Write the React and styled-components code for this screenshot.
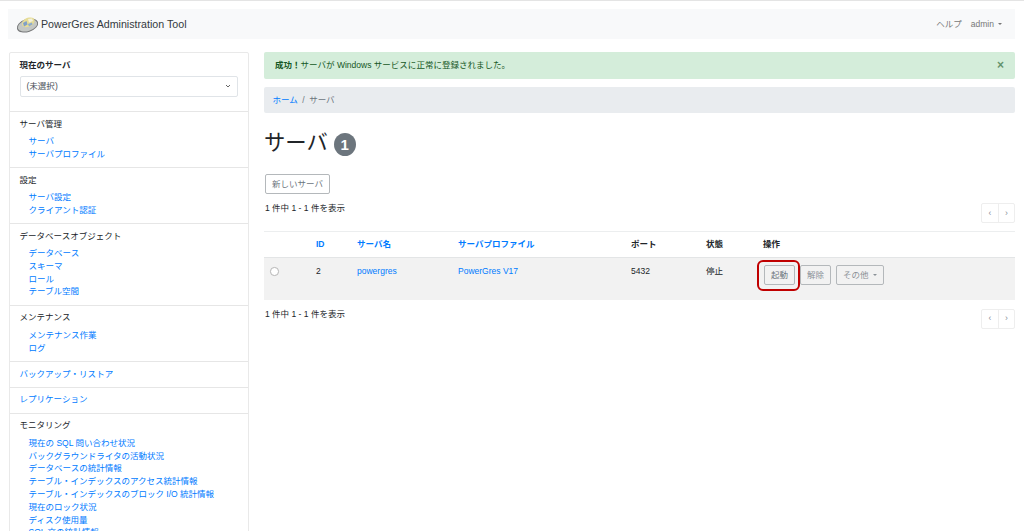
import styled, { createGlobalStyle } from 'styled-components'

const GlobalStyle = createGlobalStyle`
html, body {
  margin:0;
  height:531px;
  overflow:hidden;
  background:#fff;
}
body {
  font-family:"Liberation Sans","Noto Sans CJK JP",sans-serif;
  font-size:8.53px;
  line-height:12.8px;
  color:#212529;
}
* { box-sizing:border-box; }
`

const sections = [
  { title: "サーバ管理", links: ["サーバ", "サーバプロファイル"] },
  { title: "設定", links: ["サーバ設定", "クライアント認証"] },
  { title: "データベースオブジェクト", links: ["データベース", "スキーマ", "ロール", "テーブル空間"] },
  { title: "メンテナンス", links: ["メンテナンス作業", "ログ"] },
  { link: "バックアップ・リストア" },
  { link: "レプリケーション" },
  {
    title: "モニタリング",
    links: [
      "現在の SQL 問い合わせ状況",
      "バックグラウンドライタの活動状況",
      "データベースの統計情報",
      "テーブル・インデックスのアクセス統計情報",
      "テーブル・インデックスのブロック I/O 統計情報",
      "現在のロック状況",
      "ディスク使用量",
      "SQL 文の統計情報",
    ],
  },
]

function Logo() {
  return (
    <svg width="23" height="19" viewBox="0 0 23 19">
      <ellipse cx="11.5" cy="10.5" rx="10.5" ry="6" transform="rotate(-18 11.5 10.5)" fill="#c4c7c4" stroke="#77797a" strokeWidth="1" />
      <path d="M6 9c0-3 3-6 7-6.5 4-.5 6 1 5.500 3.500-.5 3-3 5.500-7 6-3.500.5-5.500-.5-5.500-3z" fill="#e6dc96" />
      <path d="M7 8l3.500-2 1 3.500-3.500 2z" fill="#7f9fc9" />
      <path d="M12 4l4-.5 1 2.500-4 1.500z" fill="#f3f1dc" />
      <path d="M12 9l4-1.500.5 2-3.500 2z" fill="#8daccc" />
    </svg>
  )
}

function Pager() {
  return (
    <PagerGroup>
      <PagerButton>‹</PagerButton>
      <PagerButton>›</PagerButton>
    </PagerGroup>
  )
}

function App() {
  return (
    <Page>
      <GlobalStyle />
      <Navbar>
        <Brand><Logo />PowerGres Administration Tool</Brand>
        <NavRight>
          <NavLink>ヘルプ</NavLink>
          <NavLink>admin<Caret /></NavLink>
        </NavRight>
      </Navbar>
      <Columns>
        <Sidebar>
          <CurrentServer>
            <Strong>現在のサーバ</Strong>
            <FakeSelect>
              (未選択)
              <svg width="6" height="4" viewBox="0 0 6 4"><path d="M1 1l2 2 2-2" fill="none" stroke="#666" strokeWidth="1" /></svg>
            </FakeSelect>
          </CurrentServer>
          {sections.map(section => (
            <Section key={section.title || section.link}>
              {section.link ? <Link>{section.link}</Link> : <SectionTitle>{section.title}</SectionTitle>}
              {section.links && (
                <SubList>
                  {section.links.map(link => <Link key={link}>{link}</Link>)}
                </SubList>
              )}
            </Section>
          ))}
        </Sidebar>
        <Main>
          <Alert>
            <span><Strong>成功！</Strong>サーバが Windows サービスに正常に登録されました。</span>
            <Close>×</Close>
          </Alert>
          <Breadcrumb>
            <Link>ホーム</Link>
            <BreadcrumbSep>/</BreadcrumbSep>
            <span>サーバ</span>
          </Breadcrumb>
          <Heading>サーバ<Badge>1</Badge></Heading>
          <OutlineButton $wide>新しいサーバ</OutlineButton>
          <ResultRow $height="29px">
            <CountText>1 件中 1 - 1 件を表示</CountText>
            <Pager />
          </ResultRow>
          <Table>
            <colgroup>
              <col width="45.6" />
              <col width="41" />
              <col width="101" />
              <col width="173" />
              <col width="75" />
              <col width="57" />
              <col />
            </colgroup>
            <thead>
              <tr>
                <Th />
                <Th><Link>ID</Link></Th>
                <Th><Link>サーバ名</Link></Th>
                <Th><Link>サーバプロファイル</Link></Th>
                <Th>ポート</Th>
                <Th>状態</Th>
                <Th>操作</Th>
              </tr>
            </thead>
            <tbody>
              <tr>
                <Td><Radio /></Td>
                <Td>2</Td>
                <Td><Link>powergres</Link></Td>
                <Td><Link>PowerGres V17</Link></Td>
                <Td>5432</Td>
                <Td>停止</Td>
                <Td>
                  <Actions>
                    <Highlighted><OutlineButton>起動</OutlineButton></Highlighted>
                    <OutlineButton $muted>解除</OutlineButton>
                    <OutlineButton $muted>その他<Caret /></OutlineButton>
                  </Actions>
                </Td>
              </tr>
            </tbody>
          </Table>
          <ResultRow $height="27px">
            <CountText>1 件中 1 - 1 件を表示</CountText>
            <Pager />
          </ResultRow>
        </Main>
      </Columns>
    </Page>
  )
}

const Page = styled.div`
border-top:1px solid #e4e4e4;
padding:8px 9px 0 8px;
height:531px;
overflow:hidden;
`

const Navbar = styled.div`
display:flex;
align-items:center;
justify-content:space-between;
height:30px;
padding:0 8px;
background:#f8f9fa;
`

const Brand = styled.div`
display:flex;
align-items:center;
gap:2px;
font-size:10.67px;
color:#343a40;
`

const NavRight = styled.div`
display:flex;
gap:9px;
margin-right:5px;
`

const NavLink = styled.span`
color:#777;
`

const Caret = styled.span`
display:inline-block;
margin-left:4px;
vertical-align:1.5px;
border-top:2.5px solid currentColor;
border-left:2.5px solid transparent;
border-right:2.5px solid transparent;
`

const Columns = styled.div`
display:flex;
align-items:flex-start;
gap:15px;
margin-top:13px;
`

const Sidebar = styled.div`
width:240px;
margin-left:1px;
flex:none;
border:1px solid #e9e9e9;
border-radius:2px;
`

const CurrentServer = styled.div`
height:58px;
padding:6px 10px 0 9.5px;
`

const Strong = styled.strong`
font-weight:700;
`

const FakeSelect = styled.div`
display:flex;
align-items:center;
justify-content:space-between;
height:21px;
margin-top:4px;
padding:0 6px;
color:#495057;
border:1px solid #e0e4e8;
border-radius:2px;
`

const Section = styled.div`
padding:5.6px 10px 6.6px 9.5px;
border-top:1px solid #e6e6e6;
`

const SectionTitle = styled.div`
color:#212529;
`

const SubList = styled.div`
display:flex;
flex-direction:column;
margin-top:4.5px;
padding-left:9px;
`

const Link = styled.a`
color:#007bff;
`

const Main = styled.div`
flex:1;
min-width:0;
`

const Alert = styled.div`
display:flex;
align-items:center;
justify-content:space-between;
height:27px;
padding:0 11px;
color:#155724;
background:#d4edda;
border-radius:2px;
`

const Close = styled.span`
font-size:12px;
font-weight:700;
opacity:.6;
`

const Breadcrumb = styled.div`
display:flex;
align-items:center;
height:26px;
margin-top:8px;
padding:0 8.5px;
color:#6c757d;
background:#e9ecef;
border-radius:2px;
`

const BreadcrumbSep = styled.span`
padding:0 4.5px;
`

const Heading = styled.h1`
display:flex;
align-items:center;
gap:6px;
height:26px;
margin:17px 0 1px;
font-size:21.33px;
font-weight:400;
line-height:26px;
`

const Badge = styled.span`
display:inline-flex;
align-items:center;
justify-content:center;
width:22px;
height:23px;
margin-top:3px;
font-size:15px;
font-weight:700;
color:#fff;
background:#6c757d;
border-radius:50%;
`

const OutlineButton = styled.button`
display:inline-flex;
align-items:center;
height:20px;
margin-top:${({ $wide }) => $wide ? "17px" : "0"};
margin-left:${({ $wide }) => $wide ? "1px" : "0"};
padding:0 6px;
font:inherit;
color:${({ $muted }) => $muted ? "#8a9197" : "#6c757d"};
background:transparent;
border:1px solid #b4b8bb;
border-radius:2px;
`

const ResultRow = styled.div`
display:flex;
justify-content:space-between;
align-items:flex-start;
margin-top:8px;
height:${({ $height }) => $height};
`

const CountText = styled.span`
margin-left:1px;
`

const PagerGroup = styled.div`
display:flex;
margin-top:1px;
border:1px solid #eee;
border-radius:2px;
`

const PagerButton = styled.span`
display:flex;
align-items:center;
justify-content:center;
width:16px;
height:18px;
color:#868e96;
&+&{ border-left:1px solid #eee; }
`

const Table = styled.table`
width:100%;
table-layout:fixed;
border-collapse:collapse;
`

const Th = styled.th`
height:26px;
padding:0 6.4px;
text-align:left;
font-weight:700;
border-top:1px solid #eceeef;
border-bottom:1px solid #e3e5e6;
`

const Td = styled.td`
height:42px;
padding:7px 6.4px 0;
vertical-align:top;
color:#212529;
background:#f2f2f2;
`

const Radio = styled.span`
display:block;
width:8.5px;
height:8.5px;
margin-top:2px;
border:1px solid #b5b5b5;
border-radius:50%;
background:#fff;
`

const Actions = styled.div`
display:flex;
gap:5px;
margin:0 0 0 1px;
`

const Highlighted = styled.span`
position:relative;
display:inline-flex;
&::after {
  content:"";
  position:absolute;
  inset:-5px -5px -6px -7px;
  border:2.5px solid #c00000;
  border-radius:6px;
}
`

export default App;
